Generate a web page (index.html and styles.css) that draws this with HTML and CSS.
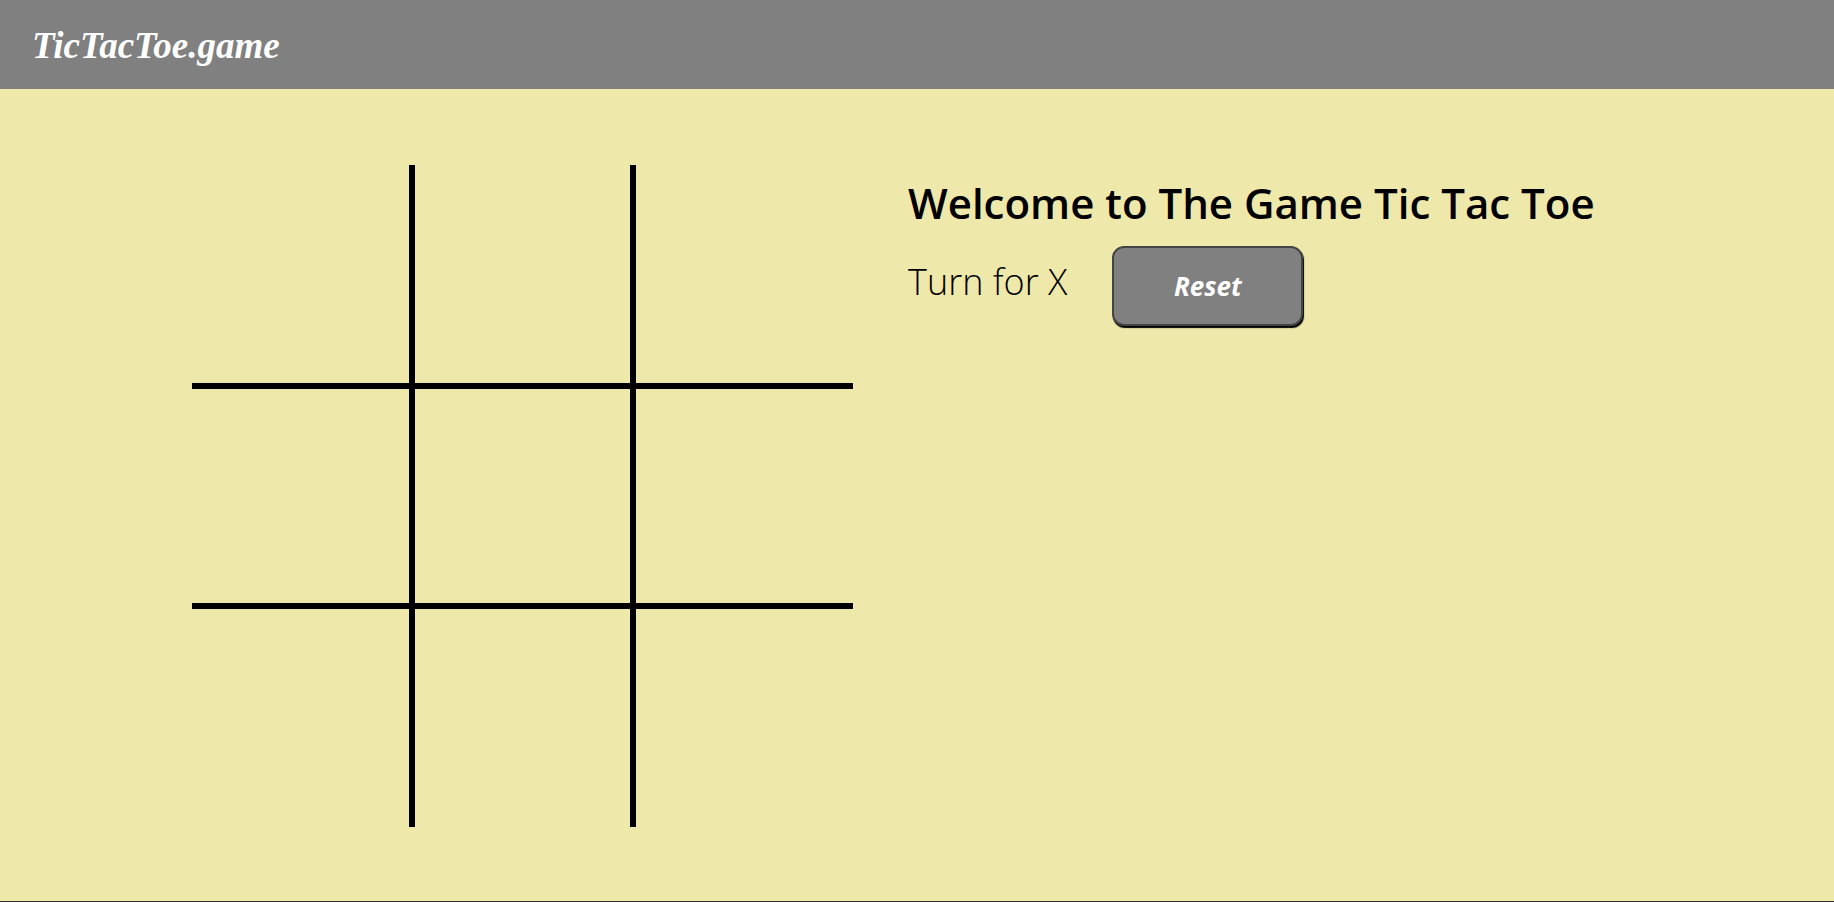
FILE: index.html
```html
<!DOCTYPE html>
<html lang="en">
<head>
<meta charset="utf-8">
<title>TicTacToe.game</title>
<link rel="stylesheet" href="styles.css">
</head>
<body>
<header class="navbar">
  <span class="brand">TicTacToe.game</span>
</header>
<main class="game">
  <div class="board">
    <div class="cell"></div><div class="cell"></div><div class="cell"></div>
    <div class="cell"></div><div class="cell"></div><div class="cell"></div>
    <div class="cell"></div><div class="cell"></div><div class="cell"></div>
  </div>
  <section class="info">
    <h1 class="title">Welcome to The Game Tic Tac Toe</h1>
    <div class="status">
      <span class="turn">Turn for X</span>
      <button class="reset">Reset</button>
    </div>
  </section>
</main>
<footer class="footer"></footer>
</body>
</html>
```

FILE: styles.css
```css
* { box-sizing: border-box; }
html, body { margin: 0; padding: 0; }
body {
  background: #eee8aa;
  font-family: "Open Sans", "Noto Sans", sans-serif;
  color: #000;
  overflow: hidden;
}
.navbar {
  height: 89px;
  background: #808080;
  display: flex;
  align-items: center;
  padding-left: 32px;
}
.brand {
  font-family: "Liberation Serif", "Times New Roman", serif;
  font-style: italic;
  font-weight: bold;
  font-size: 37px;
  color: #fff;
  padding-top: 1px;
}
.game {
  height: 812px;
  display: flex;
  align-items: flex-start;
  padding: 76px 0 0 192px;
  gap: 55px;
}
.board {
  display: grid;
  grid-template-columns: 217px 215px 217px;
  grid-template-rows: 218px 214px 218px;
  gap: 6px;
  background: #000;
}
.cell { background: #eee8aa; }
.info { padding-top: 10px; }
.title {
  margin: 0;
  font-size: 42px;
  font-weight: 600;
  line-height: 56px;
}
.status {
  display: flex;
  align-items: center;
  gap: 45px;
  margin-top: 15px;
}
.turn {
  font-size: 36px;
  font-weight: 300;
  margin-top: -10px;
}
.reset {
  width: 191px;
  height: 80px;
  background: #808080;
  border: 2px solid #444;
  border-radius: 12px;
  box-shadow: 1px 2px 1px #000;
  color: #fff;
  font-family: "Open Sans", "Noto Sans", sans-serif;
  font-style: italic;
  font-weight: 700;
  font-size: 26px;
}
.footer {
  height: 1px;
  background: #333;
}
```
